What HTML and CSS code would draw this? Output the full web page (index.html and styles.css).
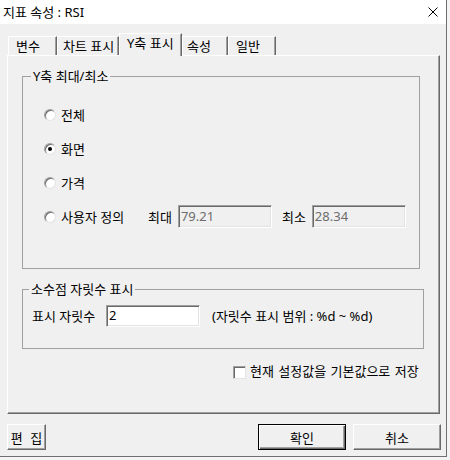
FILE: index.html
```html
<!DOCTYPE html>
<html lang="ko">
<head>
<meta charset="utf-8">
<title>지표 속성 : RSI</title>
<link rel="stylesheet" href="styles.css">
</head>
<body>
<div class="window">
  <div class="titlebar">
    <span class="title">지표 속성 : RSI</span>
    <svg class="close" width="10" height="10" viewBox="0 0 10 10"><path d="M0.5 0.5 L9.5 9.5 M9.5 0.5 L0.5 9.5" stroke="#000" stroke-width="1" fill="none"/></svg>
  </div>
  <div class="content">
    <div class="tabs">
      <div class="tab tab-var">변수</div>
      <div class="tab tab-chart">차트 표시</div>
      <div class="tab tab-y active">Y축 표시</div>
      <div class="tab tab-attr">속성</div>
      <div class="tab tab-gen">일반</div>
    </div>
    <div class="panel">
      <fieldset class="group group-y">
        <legend>Y축 최대/최소</legend>
        <div class="group-body radios">
          <div class="row"><span class="radio"></span><span class="rlabel">전체</span></div>
          <div class="row"><span class="radio on"></span><span class="rlabel">화면</span></div>
          <div class="row"><span class="radio"></span><span class="rlabel">가격</span></div>
          <div class="row">
            <span class="radio"></span><span class="rlabel rlabel-wide">사용자 정의</span>
            <span class="lbl">최대</span>
            <input class="field disabled" type="text" value="79.21" disabled>
            <span class="lbl lbl-min">최소</span>
            <input class="field disabled" type="text" value="28.34" disabled>
          </div>
        </div>
      </fieldset>
      <fieldset class="group group-dec">
        <legend>소수점 자릿수 표시</legend>
        <div class="group-body dec">
          <span class="dec-label">표시 자릿수</span>
          <input class="field field-dec" type="text" value="2">
          <span class="hint">(자릿수 표시 범위 : %d ~ %d)</span>
        </div>
      </fieldset>
      <div class="save-row">
        <span class="checkbox"></span>
        <span class="save-label">현재 설정값을 기본값으로 저장</span>
      </div>
    </div>
    <div class="buttons">
      <button class="btn btn-edit">편 집</button>
      <button class="btn btn-ok">확인</button>
      <button class="btn btn-cancel">취소</button>
    </div>
  </div>
</div>
</body>
</html>
```

FILE: styles.css
```css
html, body {
  margin: 0;
  padding: 0;
}
body {
  background: #f4f4f4;
  font-family: "Noto Sans", "Noto Sans CJK KR", sans-serif;
  font-size: 13px;
  line-height: 14px;
  color: #000;
}
.window {
  width: 446px;
  height: 456px;
  border-right: 1px solid #707070;
  border-bottom: 1px solid #707070;
  background: #f0f0f0;
  display: flex;
  flex-direction: column;
}
.titlebar {
  height: 24px;
  flex: none;
  background: #fff;
  display: flex;
  align-items: center;
  justify-content: space-between;
  padding: 0 8px 0 3px;
}
.close {
  display: block;
}
.content {
  flex: 1;
  display: flex;
  flex-direction: column;
  padding: 9px 5px 0 7px;
}
.tabs {
  display: flex;
  align-items: flex-end;
  height: 23px;
  padding-left: 1px;
  margin-bottom: -1px;
  position: relative;
  z-index: 1;
}
.tab {
  box-sizing: border-box;
  height: 19px;
  margin-bottom: 1px;
  border-top: 1px solid #fff;
  border-left: 1px solid #fff;
  border-right: 1px solid #696969;
  box-shadow: inset -1px 0 0 #a0a0a0;
  padding-top: 2px;
  padding-left: 7px;
  white-space: nowrap;
  background: #f0f0f0;
}
.tab-var { width: 49px; }
.tab-chart { width: 62px; padding-left: 5px; }
.tab-y { width: 63px; }
.tab-attr { width: 46px; padding-left: 4px; }
.tab-gen { width: 48px; }
.tab.active {
  height: 23px;
  margin-bottom: 0;
  padding-left: 7px;
}
.panel {
  box-sizing: border-box;
  width: 433px;
  height: 359px;
  border: 1px solid;
  border-color: #fff #696969 #696969 #fff;
  box-shadow: inset -1px -1px 0 #a0a0a0;
  padding: 13px 0 0 14px;
}
.group {
  box-sizing: border-box;
  margin: 0;
  padding: 0;
  border: 1px solid #a0a0a0;
}
.group legend {
  padding: 0 2px;
  margin-left: 8px;
  line-height: 14px;
}
.group-y {
  width: 398px;
}
.group-dec {
  width: 402px;
  margin-top: 13px;
}
.group-dec legend {
  margin-left: 6px;
}
.group-body {
  box-sizing: border-box;
}
.radios {
  height: 185px;
  padding: 22px 0 0 21px;
  display: flex;
  flex-direction: column;
  gap: 14px;
}
.row {
  display: flex;
  align-items: center;
  height: 20px;
}
.radio {
  box-sizing: border-box;
  width: 12px;
  height: 12px;
  border-radius: 50%;
  background: #fff;
  border: 1px solid;
  border-color: #a0a0a0 #e3e3e3 #e3e3e3 #a0a0a0;
  box-shadow: inset 1px 1px 0 #696969;
  display: flex;
  align-items: center;
  justify-content: center;
  flex: none;
}
.radio.on::after {
  content: "";
  width: 4px;
  height: 4px;
  border-radius: 50%;
  background: #000;
}
.rlabel {
  margin-left: 5px;
}
.rlabel-wide {
  width: 87px;
}
.lbl {
  margin-right: 6px;
}
.lbl-min {
  margin-left: 10px;
  margin-right: 6px;
}
.field {
  box-sizing: border-box;
  width: 94px;
  height: 23px;
  margin: -2px 0 -1px;
  padding: 0 0 2px 2px;
  border: 1px solid;
  border-color: #a0a0a0 #fff #fff #a0a0a0;
  box-shadow: inset 1px 1px 0 #696969, inset -1px -1px 0 #e3e3e3;
  background: #fff;
  font-family: inherit;
  font-size: 13px;
  color: #000;
  outline: none;
}
.field.disabled {
  background: #f0f0f0;
  color: #6d6d6d;
  -webkit-text-fill-color: #6d6d6d;
  opacity: 1;
}
.dec {
  height: 52px;
  padding: 9px 0 0 9px;
  display: flex;
  align-items: flex-start;
}
.dec-label {
  width: 74px;
  line-height: 22px;
}
.field-dec {
  height: 22px;
  margin: 0;
}
.hint {
  margin-left: 12px;
  line-height: 22px;
}
.save-row {
  display: flex;
  align-items: center;
  margin: 17px 0 0 211px;
}
.checkbox {
  box-sizing: border-box;
  width: 13px;
  height: 13px;
  background: #fff;
  border: 1px solid;
  border-color: #a0a0a0 #e3e3e3 #e3e3e3 #a0a0a0;
  box-shadow: inset 1px 1px 0 #696969;
  flex: none;
}
.save-label {
  margin-left: 4px;
  margin-top: -3px;
  word-spacing: 1px;
}
.buttons {
  display: flex;
  margin-top: 10px;
}
.btn {
  box-sizing: border-box;
  height: 26px;
  padding: 0;
  margin: 0;
  background: #f0f0f0;
  border: 1px solid;
  border-color: #fff #696969 #696969 #fff;
  box-shadow: inset -1px -1px 0 #a0a0a0;
  font-family: inherit;
  font-size: 13px;
  color: #000;
}
.btn-edit {
  width: 39px;
  word-spacing: 4px;
}
.btn-ok {
  width: 88px;
  margin-left: auto;
  border-color: #000;
  box-shadow: inset 1px 1px 0 #fff, inset -1px -1px 0 #696969, inset -2px -2px 0 #a0a0a0;
}
.btn-cancel {
  width: 88px;
  margin-left: 7px;
}
```
